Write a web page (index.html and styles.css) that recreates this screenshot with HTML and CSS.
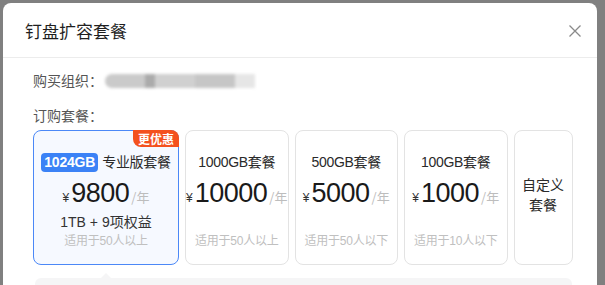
FILE: index.html
```html
<!DOCTYPE html>
<html lang="zh-CN">
<head>
<meta charset="utf-8">
<title>钉盘扩容套餐</title>
<link rel="stylesheet" href="styles.css">
</head>
<body>
<div class="modal">
  <div class="modal-header">
    <div class="modal-title">钉盘扩容套餐</div>
    <svg class="close" width="14" height="14" viewBox="0 0 14 14"><path d="M1.5 1.5L12.5 12.5M12.5 1.5L1.5 12.5" stroke="#8a8a8a" stroke-width="1.3" fill="none"/></svg>
  </div>
  <div class="modal-body">
    <div class="row">
      <span class="label">购买组织：</span>
      <span class="blurred"><span class="b1"></span><span class="b2"></span><span class="b3"></span><span class="b4"></span><span class="b5"></span></span>
    </div>
    <div class="row label-row"><span class="label">订购套餐：</span></div>
    <div class="cards">
      <div class="card card-active card-wide">
        <div class="badge">更优惠</div>
        <div class="card-title"><span class="tag">1024GB</span>专业版套餐</div>
        <div class="price"><span class="yen">¥</span><span class="num">9800</span><span class="unit">/年</span></div>
        <div class="extra">1TB + 9项权益</div>
        <div class="note">适用于50人以上</div>
      </div>
      <div class="card">
        <div class="card-title">1000GB套餐</div>
        <div class="price"><span class="yen">¥</span><span class="num">10000</span><span class="unit">/年</span></div>
        <div class="extra"></div>
        <div class="note">适用于50人以上</div>
      </div>
      <div class="card">
        <div class="card-title">500GB套餐</div>
        <div class="price"><span class="yen">¥</span><span class="num">5000</span><span class="unit">/年</span></div>
        <div class="extra"></div>
        <div class="note">适用于50人以下</div>
      </div>
      <div class="card">
        <div class="card-title">100GB套餐</div>
        <div class="price"><span class="yen">¥</span><span class="num">1000</span><span class="unit">/年</span></div>
        <div class="extra"></div>
        <div class="note">适用于10人以下</div>
      </div>
      <div class="card card-custom">
        <div class="custom-text">自定义<br>套餐</div>
      </div>
    </div>
    <div class="detail"></div>
  </div>
</div>
</body>
</html>
```
FILE: styles.css
```css
html, body {
  margin: 0;
  padding: 0;
  height: 100%;
  overflow: hidden;
}
body {
  background: #808080;
  font-family: "Liberation Sans", "Noto Sans CJK SC", sans-serif;
  color: #1f1f1f;
}
.modal {
  margin: 3px 0 0 3px;
  width: 594px;
  height: 300px;
  background: #fff;
  border-radius: 8px 8px 0 0;
}
.modal-header {
  height: 54px;
  border-bottom: 1px solid #ececec;
  display: flex;
  align-items: center;
  justify-content: space-between;
  padding: 0 15px 0 22px;
}
.modal-title {
  font-size: 17px;
  color: #1f1f1f;
  font-family: "Noto Sans CJK SC", sans-serif;
}
.close {
  display: block;
  margin-top: 1px;
}
.modal-body {
  padding: 12px 0 0 30px;
}
.row {
  display: flex;
  align-items: center;
  height: 20px;
}
.label-row {
  margin-top: 15px;
}
.label {
  font-size: 14px;
  color: #555;
  font-family: "Noto Sans CJK SC", sans-serif;
}
.blurred {
  display: flex;
  height: 14px;
  margin-left: 2px;
  margin-top: 2px;
  filter: blur(1.5px);
  border-radius: 7px 0 0 7px;
  overflow: hidden;
}
.blurred span { display: block; height: 14px; }
.b1 { width: 40px; background: #cacaca; }
.b2 { width: 10px; background: #ababab; }
.b3 { width: 40px; background: #d0d0d0; }
.b4 { width: 40px; background: #c6c6c6; }
.b5 { width: 20px; background: #e6e6e6; }
.cards {
  display: flex;
  gap: 6px;
  margin-top: 5px;
}
.card {
  position: relative;
  width: 103.5px;
  height: 135px;
  box-sizing: border-box;
  border: 1px solid #e3e3e3;
  border-radius: 8px;
  display: flex;
  flex-direction: column;
  align-items: center;
  padding-top: 21px;
  background: #fff;
}
.card-wide { width: 146px; }
.card-active {
  border-color: #4b88f7;
  background: #f6f9ff;
}
.badge {
  position: absolute;
  top: -1px;
  right: -1px;
  height: 17px;
  padding: 0 5px;
  background: #f4511e;
  color: #fff;
  font-size: 12px;
  font-weight: bold;
  line-height: 17px;
  border-radius: 0 8px 0 8px;
  font-family: "Noto Sans CJK SC", sans-serif;
}
.card-title {
  height: 20px;
  line-height: 20px;
  font-size: 14px;
  color: #2a2a2a;
  display: flex;
  align-items: center;
  letter-spacing: -0.3px;
}
.tag {
  background: #3b82f6;
  color: #fff;
  font-weight: bold;
  font-size: 14px;
  height: 19px;
  line-height: 19px;
  padding: 0 3px;
  border-radius: 4px;
  margin-right: 4px;
  letter-spacing: -0.2px;
}
.price {
  margin-top: 4px;
  height: 34px;
  display: flex;
  align-items: baseline;
  line-height: 34px;
}
.yen {
  font-size: 12px;
  color: #333;
  margin-right: 2px;
}
.num {
  font-size: 27px;
  color: #1a1a1a;
  letter-spacing: -0.5px;
}
.unit {
  font-size: 13px;
  color: #bdbdbd;
  margin-left: 2px;
  font-family: "Noto Sans CJK SC", sans-serif;
}
.extra {
  margin-top: 2px;
  height: 20px;
  line-height: 20px;
  font-size: 14px;
  color: #333;
}
.note {
  height: 18px;
  line-height: 18px;
  font-size: 12px;
  color: #c0c0c0;
  letter-spacing: -0.2px;
}
.card-custom {
  width: 59px;
  padding-top: 0;
  justify-content: center;
}
.custom-text {
  font-size: 14px;
  line-height: 20px;
  color: #2a2a2a;
  text-align: center;
  margin-top: -8px;
  font-family: "Noto Sans CJK SC", sans-serif;
}
.detail {
  position: relative;
  margin: 13px 0 0 2px;
  width: 537px;
  height: 40px;
  background: #f5f5f6;
  border-radius: 6px;
}
.detail::before {
  content: "";
  position: absolute;
  top: -5px;
  left: 66px;
  border-left: 5px solid transparent;
  border-right: 5px solid transparent;
  border-bottom: 5px solid #f5f5f6;
}
```
